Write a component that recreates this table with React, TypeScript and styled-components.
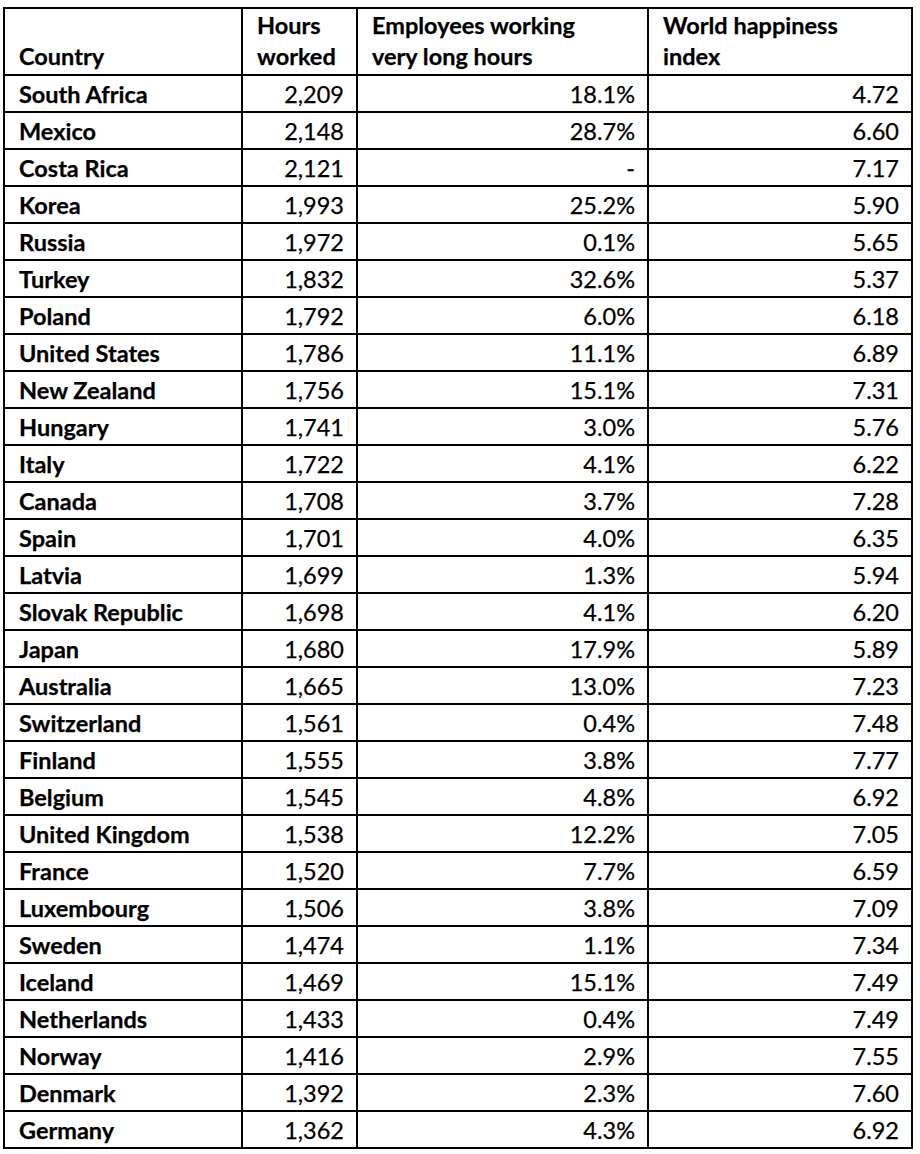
import React from "react";
import styled, { createGlobalStyle } from "styled-components";

type Row = [string, string, string, string];

const rows: Row[] = [
    ["South Africa", "2,209", "18.1%", "4.72"],
    ["Mexico", "2,148", "28.7%", "6.60"],
    ["Costa Rica", "2,121", "-", "7.17"],
    ["Korea", "1,993", "25.2%", "5.90"],
    ["Russia", "1,972", "0.1%", "5.65"],
    ["Turkey", "1,832", "32.6%", "5.37"],
    ["Poland", "1,792", "6.0%", "6.18"],
    ["United States", "1,786", "11.1%", "6.89"],
    ["New Zealand", "1,756", "15.1%", "7.31"],
    ["Hungary", "1,741", "3.0%", "5.76"],
    ["Italy", "1,722", "4.1%", "6.22"],
    ["Canada", "1,708", "3.7%", "7.28"],
    ["Spain", "1,701", "4.0%", "6.35"],
    ["Latvia", "1,699", "1.3%", "5.94"],
    ["Slovak Republic", "1,698", "4.1%", "6.20"],
    ["Japan", "1,680", "17.9%", "5.89"],
    ["Australia", "1,665", "13.0%", "7.23"],
    ["Switzerland", "1,561", "0.4%", "7.48"],
    ["Finland", "1,555", "3.8%", "7.77"],
    ["Belgium", "1,545", "4.8%", "6.92"],
    ["United Kingdom", "1,538", "12.2%", "7.05"],
    ["France", "1,520", "7.7%", "6.59"],
    ["Luxembourg", "1,506", "3.8%", "7.09"],
    ["Sweden", "1,474", "1.1%", "7.34"],
    ["Iceland", "1,469", "15.1%", "7.49"],
    ["Netherlands", "1,433", "0.4%", "7.49"],
    ["Norway", "1,416", "2.9%", "7.55"],
    ["Denmark", "1,392", "2.3%", "7.60"],
    ["Germany", "1,362", "4.3%", "6.92"],
];

const App = () => {
    return (
        <>
            <GlobalStyle />
            <Sheet>
                <Table>
                    <colgroup>
                        <col style={{ width: 238 }} />
                        <col style={{ width: 115 }} />
                        <col style={{ width: 291 }} />
                        <col style={{ width: 264 }} />
                    </colgroup>
                    <thead>
                        <tr>
                            <HeadCell>Country</HeadCell>
                            <HeadCell>Hours<br />worked</HeadCell>
                            <HeadCell>Employees working<br />very long hours</HeadCell>
                            <HeadCell>World happiness<br />index</HeadCell>
                        </tr>
                    </thead>
                    <tbody>
                        {rows.map(([country, hours, share, index]) => (
                            <tr key={country}>
                                <NameCell>{country}</NameCell>
                                <NumCell>{hours}</NumCell>
                                <NumCell>{share}</NumCell>
                                <NumCell>{index}</NumCell>
                            </tr>
                        ))}
                    </tbody>
                </Table>
            </Sheet>
        </>
    );
};

export default App;

const GlobalStyle = createGlobalStyle`
    body {
        margin: 0;
        background: #fff;
        font-family: Lato, "Open Sans", sans-serif;
        color: #000;
    }
`;

const Sheet = styled.div`
    padding: 7px 0 0 3px;
`;

const Table = styled.table`
    border-collapse: collapse;
    table-layout: fixed;
    width: 910px;
`;

const Cell = styled.td`
    border: 2px solid #000;
    font-size: 23.5px;
    line-height: 31px;
    padding: 0 12px 0 14px;
    white-space: nowrap;
    -webkit-text-stroke: 0.25px #000;
`;

const HeadCell = styled(Cell).attrs({ as: "th" })`
    height: 63px;
    font-weight: 700;
    text-align: left;
    vertical-align: bottom;
    padding-bottom: 2px;
`;

const NameCell = styled(Cell)`
    height: 33px;
    font-weight: 700;
    padding-top: 2px;
`;

const NumCell = styled(Cell)`
    height: 33px;
    text-align: right;
    padding-top: 2px;
`;
